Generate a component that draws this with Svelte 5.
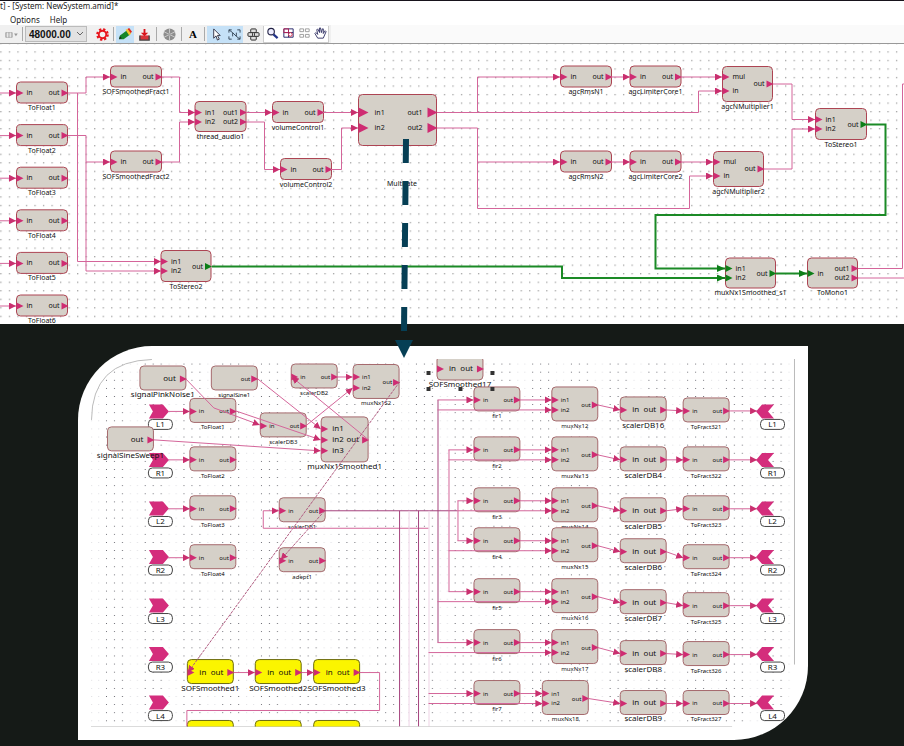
<script lang="ts">
	type Port = [string, number];

	interface Block {
		x: number;
		y: number;
		w: number;
		h: number;
		label: string;
		ins?: Port[];
		outs?: Port[];
		kind?: string;
		arrow?: number;
		inset?: number;
		green?: string;
	}

	interface Wire {
		points: string;
		kind?: string;
		open?: boolean;
	}

	let sampleRate = $state('48000.00');

	function simple(x: number, y: number, label: string): Block {
		return { x, y, w: 51, h: 21, label, ins: [['in', y + 11]], outs: [['out', y + 11]] };
	}

	const systemBlocks: Block[] = [
		...[0, 1, 2, 3, 4, 5].map((i) => simple(16.5, 82 + i * 42.6, `ToFloat${i + 1}`)),
		simple(110.5, 66, 'SOFSmoothedFract1'),
		simple(110.5, 151, 'SOFSmoothedFract2'),
		{ x: 195, y: 101.5, w: 51, h: 30, label: 'thread_audio1', ins: [['in1', 112.5], ['in2', 122]], outs: [['out1', 112.5], ['out2', 122]] },
		simple(272.5, 101.5, 'volumeControl1'),
		simple(280.5, 158.5, 'volumeControl2'),
		{ x: 358.5, y: 94.5, w: 78, h: 51, label: '', arrow: 10, inset: 16, ins: [['in1', 112.5], ['in2', 128]], outs: [['out1', 112.5], ['out2', 128]] },
		simple(560.5, 66, 'agcRmsN1'),
		simple(560.5, 151, 'agcRmsN2'),
		simple(630, 66, 'agcLimiterCore1'),
		simple(630, 151, 'agcLimiterCore2'),
		{ x: 722.5, y: 66.5, w: 50, h: 35, label: 'agcNMultiplier1', ins: [['mul', 77], ['in', 91]], outs: [['out', 84]] },
		{ x: 713.5, y: 151.5, w: 50, h: 35, label: 'agcNMultiplier2', ins: [['mul', 162], ['in', 176]], outs: [['out', 169]] },
		{ x: 815.5, y: 108.5, w: 51, h: 31, label: 'ToStereo1', green: 'out', ins: [['in1', 119.5], ['in2', 129]], outs: [['out', 124.5]] },
		{ x: 161, y: 250.5, w: 50, h: 31, label: 'ToStereo2', green: 'out', ins: [['in1', 261.5], ['in2', 271]], outs: [['out', 266.5]] },
		{ x: 725.5, y: 258, w: 50, h: 30, label: 'muxNx1Smoothed_s1', green: 'both', ins: [['in1', 268.5], ['in2', 278]], outs: [['out', 273.5]] },
		{ x: 807.5, y: 258, w: 50, h: 30, label: 'ToMono1', green: 'in', ins: [['in', 273.5]], outs: [['out1', 268.5], ['out2', 278]] }
	];

	const systemWires: Wire[] = [
		...[0, 1, 2, 3, 4, 5].map((i) => ({ points: `0,${93 + i * 42.6} 16,${93 + i * 42.6}` })),
		{ points: '68,93 86,93 86,77 110,77' },
		{ points: '77.5,93 77.5,261.5 161,261.5' },
		{ points: '68,135.5 86,135.5 86,271 161,271' },
		{ points: '86,162 110,162' },
		{ points: '162,77 179.5,77 179.5,112.5 195,112.5' },
		{ points: '162,162 179.5,162 179.5,122 195,122' },
		{ points: '246,112.5 272,112.5' },
		{ points: '246,122 264.5,122 264.5,169.5 280,169.5' },
		{ points: '323,112.5 358,112.5' },
		{ points: '331,169.5 341.5,169.5 341.5,128 358,128' },
		{ points: '437,112.5 698.5,112.5 698.5,91 722,91' },
		{ points: '477.5,112.5 477.5,77 560,77' },
		{ points: '437,128 477.5,128 477.5,208.5 689.5,208.5 689.5,176 713,176' },
		{ points: '477.5,162 560,162' },
		{ points: '611,77 630,77' },
		{ points: '611,162 630,162' },
		{ points: '681,77 722,77' },
		{ points: '681,162 713,162' },
		{ points: '773,84 792,84 792,119.5 815,119.5' },
		{ points: '764,169 792,169 792,129 815,129' },
		{ points: '858,268.5 902.5,268.5 902.5,84 904,84', open: true },
		{ points: '858,278 904,278', open: true },
		{ points: '866,124.5 885.5,124.5 885.5,215 655.5,215 655.5,268.5 725,268.5', kind: 'green' },
		{ points: '212,266.5 562,266.5 562,278 725,278', kind: 'green' },
		{ points: '776,273.5 807,273.5', kind: 'green' }
	];

	function small(x: number, y: number, label: string, kind = 'small', source = false): Block {
		return {
			x, y, w: 46, h: 24, label, kind,
			arrow: 7,
			inset: kind === 'small' ? 9 : 12,
			ins: source ? [] : [['in', y + 13]],
			outs: [['out', y + 13]]
		};
	}

	const rowTops = [387, 437, 488, 528, 579, 630, 681];
	const scalerTops = [397, 447, 498, 539, 590, 641, 691];
	const scalerNames = ['scalerDB16', 'scalerDB4', 'scalerDB5', 'scalerDB6', 'scalerDB7', 'scalerDB8', 'scalerDB9'];
	const fractTops = [398, 447, 496, 545, 593, 642, 691];
	const channels = ['L1', 'R1', 'L2', 'R2', 'L3', 'R3', 'L4'];
	const muxLeft = (i: number) => (i === 6 ? 543 : 552.5);

	const detailBlocks: Block[] = [
		small(140, 366, 'signalPinkNoise1', 'large', true),
		small(211.5, 366, 'signalSine1', 'small', true),
		small(291.5, 364, 'scalerDB2'),
		{ x: 353.5, y: 364.5, w: 46, h: 34, label: 'muxNx1S2', kind: 'small', arrow: 7, inset: 9, ins: [['in1', 377], ['in2', 388]], outs: [['out', 382.5]] },
		small(190, 398.5, 'ToFloat1'),
		small(260.5, 413, 'scalerDB3'),
		{ x: 321.5, y: 417, w: 47, h: 45, label: 'muxNx1Smoothed1', kind: 'large', arrow: 7, inset: 11, ins: [['in1', 429], ['in2', 440], ['in3', 451]], outs: [['out', 440]] },
		small(107.5, 427, 'signalSineSweep1', 'large', true),
		small(190, 447, 'ToFloat2'),
		small(190, 496, 'ToFloat3'),
		small(190, 545, 'ToFloat4'),
		small(279.5, 498, 'scalerDB1'),
		small(279.5, 548, 'adept1'),
		small(437.5, 356, 'SOFSmoothed17', 'large'),
		small(187.5, 660, 'SOFSmoothed1', 'large yellow'),
		small(255.5, 660, 'SOFSmoothed2', 'large yellow'),
		small(314, 660, 'SOFSmoothed3', 'large yellow'),
		...[187.5, 255.5, 314].map((x) => ({ x, y: 721, w: 46, h: 24, label: '', kind: 'large yellow' })),
		...rowTops.flatMap((y, i): Block[] => [
			small(474.5, y, `fir${i + 1}`),
			{ x: muxLeft(i), y, w: 46, h: 34, label: `muxNx${12 + i}`, kind: 'small', arrow: 7, inset: 9, ins: [['in1', y + 13], ['in2', y + 23]], outs: [['out', y + 18]] },
			small(621, scalerTops[i], scalerNames[i], 'large'),
			small(684, fractTops[i], `ToFract32${i + 1}`)
		])
	];

	const detailWires: Wire[] = [
		...[411.5, 460, 509, 558].map((y) => ({ points: `168,${y} 190,${y}` })),
		{ points: '186,379 214,408 260,425' },
		{ points: '236,411 321,440' },
		{ points: '258,379 321,429' },
		{ points: '154,440 321,451' },
		{ points: '306,426 353,388' },
		{ points: '337,377 353,377' },
		{ points: '369,440 292,377' },
		{ points: '400,382 188,673', kind: 'dashed' },
		{ points: '325,511 281,560', kind: 'dashed' },
		{ points: '429,528.5 263.5,528.5 263.5,511 279,511' },
		{ points: '325,511 458,511', open: true, kind: 'dark' },
		{ points: '400,511 400,727', open: true, kind: 'dark' },
		{ points: '409.5,511 409.5,727', open: true, kind: 'faint' },
		{ points: '419,511 419,727', open: true, kind: 'dark' },
		{ points: '429.5,511 429.5,727', open: true, kind: 'faint' },
		{ points: '438.5,400 438.5,643', open: true, kind: 'dark' },
		{ points: '449.5,450 449.5,592', open: true },
		{ points: '458.5,501 458.5,541', open: true },
		{ points: '234,673 255,673' },
		{ points: '302,673 314,673' },
		{ points: '360,673 380,673 380,711 187,711 187,727', open: true },
		...rowTops.flatMap((y, i): Wire[] => [
			{ points: `${[438, 449, 458, 458, 449, 438, 429][i]},${y + 13} 474,${y + 13}` },
			{ points: `521,${y + 13} ${muxLeft(i)},${y + 13}` },
			{ points: `${[438, 449, 458, 449, 438, 429, 429][i]},${y + 23} ${muxLeft(i)},${y + 23}` },
			{ points: `${muxLeft(i) + 46},${y + 18} 621,${scalerTops[i] + 13}` },
			{ points: `667,${scalerTops[i] + 13} 684,${fractTops[i] + 13}` },
			{ points: `731,${fractTops[i] + 13} 758,${fractTops[i] + 13}` }
		])
	];

	const isGreen = (block: Block, side: string) => block.green === side || block.green === 'both';
</script>

{#snippet blockView(block: Block)}
	{@const size = block.arrow ?? 7}
	{@const inset = block.inset ?? 10}
	<g class="block {block.kind ?? ''}">
		<rect x={block.x} y={block.y} width={block.w} height={block.h} rx="4" />
		{#each block.ins ?? [] as [name, y]}
			<path class="port" class:green={isGreen(block, 'in')} d="M{block.x} {y - size / 2}l{size} {size / 2}l{-size} {size / 2}z" />
			<text x={block.x + inset} y={y + 2}>{name}</text>
		{/each}
		{#each block.outs ?? [] as [name, y]}
			<path class="port" class:green={isGreen(block, 'out')} d="M{block.x + block.w - size + 1} {y - size / 2}l{size} {size / 2}l{-size} {size / 2}z" />
			<text x={block.x + block.w - inset + 2} y={y + 2} text-anchor="end">{name}</text>
		{/each}
		{#if block.label}
			<text x={block.x + block.w / 2} y={block.y + block.h + 7} text-anchor="middle">{block.label}</text>
		{/if}
	</g>
{/snippet}

{#snippet wireView(wire: Wire)}
	<polyline
		class="wire {wire.kind ?? ''}"
		points={wire.points}
		marker-end={wire.open ? undefined : wire.kind === 'green' ? 'url(#arrow-green)' : 'url(#arrow)'}
	/>
{/snippet}

<main>
	<header>
		<div class="title">t] - [System: NewSystem.amid]*</div>
		<nav>
			<a href="#options">Options</a>
			<a href="#help">Help</a>
		</nav>
		<div class="toolbar">
			<button class="wide" aria-label="Layout">
				<svg viewBox="0 0 18 14"><path d="M4 5h7v5H4z" fill="#c4c4c4" stroke="#aaa" /><path d="M6 5v5M9 5v5" stroke="#eee" /><path d="M13 6h4l-2 3z" fill="#999" /></svg>
			</button>
			<i></i>
			<div class="combo">
				<select bind:value={sampleRate} aria-label="Sample rate">
					<option>48000.00</option>
					<option>44100.00</option>
				</select>
				<svg viewBox="0 0 8 6"><path d="M1 1l3 3 3-3" fill="none" stroke="#666" /></svg>
			</div>
			<button class="gear" aria-label="Settings">
				<svg viewBox="0 0 14 14"><circle cx="7" cy="7" r="5.6" fill="none" stroke="#e8141c" stroke-width="2.4" stroke-dasharray="2.4 2" /><circle cx="7" cy="7" r="4" fill="none" stroke="#e8141c" stroke-width="2" /></svg>
			</button>
			<i></i>
			<button class="active" aria-label="Edit">
				<svg viewBox="0 0 14 14"><path d="M0 12l1-4 7-5 4 4-7 5z" fill="#16862a" /><path d="M9 1l2-1 3 4-2 2z" fill="#e02a20" /><path d="M7 2l2-1 4 5-2 2z" fill="#f4c430" /><path d="M0 12l1-3 2 2z" fill="#222" /></svg>
			</button>
			<button class="roomy" aria-label="Download">
				<svg viewBox="0 0 14 14"><path d="M2 8v5h10V8" fill="#d9343a" stroke="#444" stroke-width="1.500" /><path d="M6 1h2v4h3L7 9 3 5h3z" fill="#d8141c" /></svg>
			</button>
			<i></i>
			<button class="roomy" aria-label="Run">
				<svg viewBox="0 0 14 14"><circle cx="7" cy="7" r="6.500" fill="#8d8d8d" /><path d="M7 0v14M1 4l12 6M13 4L1 10" stroke="#ccc" /><circle cx="7" cy="7" r="2" fill="#aaa" /></svg>
			</button>
			<i></i>
			<button class="letter">A</button>
			<i></i>
			<button class="active" aria-label="Select">
				<svg viewBox="0 0 14 14"><path d="M4 1v10l2.500-2.500L8 13l2-1-2-4h3z" fill="#fff" stroke="#334" /></svg>
			</button>
			<button class="active" aria-label="Fit names">
				<svg viewBox="0 0 14 14"><path d="M1 5V2h3M10 2h3v3M13 9v3h-3M4 12H1V9M1 2l4 3M13 12L9 9" fill="none" stroke="#345" /><path d="M5 9V5l4 4V5" fill="none" stroke="#345" /></svg>
			</button>
			<button class="roomy" aria-label="Network">
				<svg viewBox="0 0 14 14"><g fill="#ddd" stroke="#222"><rect x="4" y="1" width="6" height="4" rx="1" /><rect x="4" y="9" width="6" height="4" rx="1" /><rect x="1" y="5" width="5" height="4" rx="1" /><rect x="8" y="5" width="5" height="4" rx="1" /></g></svg>
			</button>
			<div class="zoom">
				<button aria-label="Zoom">
					<svg viewBox="0 0 14 14"><circle cx="5.500" cy="5" r="3.500" fill="#eef" stroke="#224" stroke-width="1.200" /><path d="M8 8l4.500 4" stroke="#238" stroke-width="2.400" /></svg>
				</button>
				<button aria-label="Zoom to fit">
					<svg viewBox="0 0 14 14"><path d="M2 2h10v9H2zM2 6h10M7 2v9" fill="none" stroke="#226" /><circle cx="9" cy="8" r="2" fill="#fff" stroke="#c24" /><path d="M2 2h5v4H2z" fill="none" stroke="#b25" /></svg>
				</button>
				<button aria-label="Zoom to selection">
					<svg viewBox="0 0 14 14"><path d="M2 2h4v3H2zM8 2h4v3H8zM2 8h4v3H2zM8 8h4v3H8z" fill="none" stroke="#999" /></svg>
				</button>
				<button aria-label="Pan">
					<svg viewBox="0 0 14 14"><path d="M4 12L1 7l1-1 2 2-1-5 1-1 2 4V1h1l1 5 1-4h1v5l2-3 1 1-3 7z" fill="#fff" stroke="#336" /></svg>
				</button>
			</div>
		</div>
	</header>

	<svg class="canvas" viewBox="0 44 904 280">
		<defs>
			<pattern id="grid" x="5" y="47.5" width="8.53" height="8.53" patternUnits="userSpaceOnUse">
				<rect x="4" y="4" width="1" height="1" fill="#666" />
			</pattern>
			<marker id="arrow" viewBox="0 0 7 7" refX="7" refY="3.5" markerWidth="7" markerHeight="7" markerUnits="userSpaceOnUse" orient="auto">
				<path d="M0 0l7 3.500-7 3.500z" fill="#c9306f" />
			</marker>
			<marker id="arrow-green" viewBox="0 0 8 7" refX="8" refY="3.5" markerWidth="8" markerHeight="7" markerUnits="userSpaceOnUse" orient="auto">
				<path d="M0 0l8 3.500-8 3.500z" fill="#0d7f18" />
			</marker>
		</defs>
		<rect y="44" width="904" height="280" fill="url(#grid)" />
		{#each systemBlocks as block}
			{@render blockView(block)}
		{/each}
		<text x="402" y="186" text-anchor="middle">Multirate</text>
		{#each systemWires as wire}
			{@render wireView(wire)}
		{/each}
	</svg>

	<section class="detail">
		<div class="panel">
			<svg viewBox="91 359 705 369">
				<defs>
					<pattern id="dots" x="105" y="360" width="38.8" height="8.12" patternUnits="userSpaceOnUse">
						<path d="M1 4h1M9 4h1M17 4h1" stroke="#66666e" />
						<path d="M25 4h1M32 4h1" stroke="#dcdce0" />
					</pattern>
					<clipPath id="frame">
						<path d="M153 359H796V665Q796 728 733 728H91V421Q91 359 153 359z" />
					</clipPath>
				</defs>
				<rect x="91" y="359" width="705" height="369" fill="url(#dots)" clip-path="url(#frame)" />
				{#each channels as channel, i}
					<g class="channel" transform="translate(0 {i * 48.6})">
						<path d="M149 404.500h14l6 7-6 7h-14l4-7z" />
						<rect x="148.5" y="419.5" width="24" height="10" rx="4" />
						<text x="160.5" y="427.5" text-anchor="middle">{channel}</text>
						<path d="M775 404.500h-12l-6 7 6 7h12l-6-7z" />
						<rect x="761.5" y="419.5" width="24" height="10" rx="4" />
						<text x="773.5" y="427.5" text-anchor="middle">{channel}</text>
					</g>
				{/each}
				<g clip-path="url(#frame)">
					{#each detailBlocks as block}
						{@render blockView(block)}
					{/each}
					{#each detailWires as wire}
						{@render wireView(wire)}
					{/each}
					<path class="handle" d="M427 371h4v4h-4zM491 371h4v4h-4zM427 387h4v4h-4zM459 387h4v4h-4zM491 387h4v4h-4z" />
				</g>
				<path class="edge" d="M91.500 420Q92 361 152 359.500M795.500 359V665M91 727.500H733" />
			</svg>
		</div>
	</section>

	<svg class="pointer" viewBox="0 0 904 358">
		<path d="M406 139L404 331" stroke="#063f55" stroke-width="6" stroke-dasharray="24 18" />
		<path d="M395 340h18l-9 18z" fill="#063f55" />
	</svg>
</main>

<style>
	:global(body) {
		margin: 0;
		background: #151a17;
	}

	main {
		position: relative;
		min-height: 100vh;
		font-family: 'Noto Sans', 'Open Sans', sans-serif;
		background: #151a17;
	}

	header {
		background: white;
		border-top: 1px solid #17131b;
	}

	.title {
		height: 13px;
		font-size: 8px;
		line-height: 10px;
		color: #222;
	}

	nav {
		display: flex;
		gap: 10px;
		height: 11px;
		padding-left: 10px;
		font-size: 8px;
		line-height: 11px;
	}

	nav a {
		color: #222;
		text-decoration: none;
	}

	.toolbar {
		display: flex;
		align-items: center;
		height: 18px;
		background: linear-gradient(90deg, #f0f0f0 331px, #fafafa 331px);
		border-bottom: 1px solid #999;
	}

	.toolbar i {
		width: 1px;
		height: 14px;
		margin: 0 2px;
		background: #aaa;
	}

	.toolbar button {
		display: flex;
		align-items: center;
		justify-content: center;
		width: 18px;
		height: 17px;
		padding: 0;
		border: none;
		background: none;
	}

	.toolbar button svg {
		height: 13px;
	}

	.toolbar .active {
		background: #c5e1f7;
	}

	.toolbar .wide,
	.toolbar .roomy {
		width: 20px;
	}

	.toolbar .gear {
		width: 24px;
		padding-left: 6px;
	}

	.toolbar .letter {
		font: bold 11px 'Liberation Serif', serif;
	}

	.combo {
		display: grid;
		align-items: center;
		width: 62px;
	}

	.combo select,
	.combo svg {
		grid-area: 1 / 1;
	}

	.combo select {
		appearance: none;
		width: 100%;
		height: 16px;
		padding: 0 3px;
		border: 1px solid #bbb;
		border-radius: 0;
		background: #e2e2e2;
		color: #111;
		font: bold 10px 'Liberation Sans', sans-serif;
	}

	.combo svg {
		width: 8px;
		margin-right: 3px;
		justify-self: end;
		pointer-events: none;
	}

	.zoom {
		display: flex;
		box-sizing: border-box;
		height: 17px;
		border: 1px solid #ccc;
		border-top: none;
		background: white;
	}

	.toolbar .zoom button {
		width: 16px;
		height: 16px;
	}

	.canvas {
		display: block;
		width: 100%;
		background: white;
	}

	.detail {
		padding: 22px 96px 6px 78px;
	}

	.panel {
		padding: 13px;
		background: white;
		border-radius: 74px 0;
	}

	.panel svg {
		display: block;
		width: 100%;
	}

	.pointer {
		position: absolute;
		top: 0;
		left: 0;
		width: 100%;
		pointer-events: none;
	}

	text {
		font-size: 7px;
		fill: #111;
	}

	.block rect {
		fill: #d5d0c8;
		stroke: #ad4453;
	}

	.block.small text {
		font-size: 6px;
	}

	.block.large text {
		font-size: 8px;
	}

	.block.small rect,
	.block.large rect {
		stroke: #a5686c;
	}

	.block.yellow rect {
		fill: #fbf500;
		stroke: #6b6a10;
	}

	.port {
		fill: #cf2c72;
	}

	.port.green {
		fill: #0d7f18;
	}

	.wire {
		fill: none;
		stroke: #d4659a;
	}

	.wire.green {
		stroke: #1b8a26;
		stroke-width: 2;
	}

	.wire.dark {
		stroke: #a5427c;
	}

	.wire.faint {
		stroke: #eed3e6;
	}

	.wire.dashed {
		stroke: #b05a80;
		stroke-dasharray: 3 1;
	}

	.channel path {
		fill: #d42d7c;
	}

	.channel rect {
		fill: white;
		stroke: #444;
	}

	.channel text {
		font-size: 8px;
	}

	.handle {
		fill: #333;
	}

	.edge {
		fill: none;
		stroke: #bbb;
	}
</style>
